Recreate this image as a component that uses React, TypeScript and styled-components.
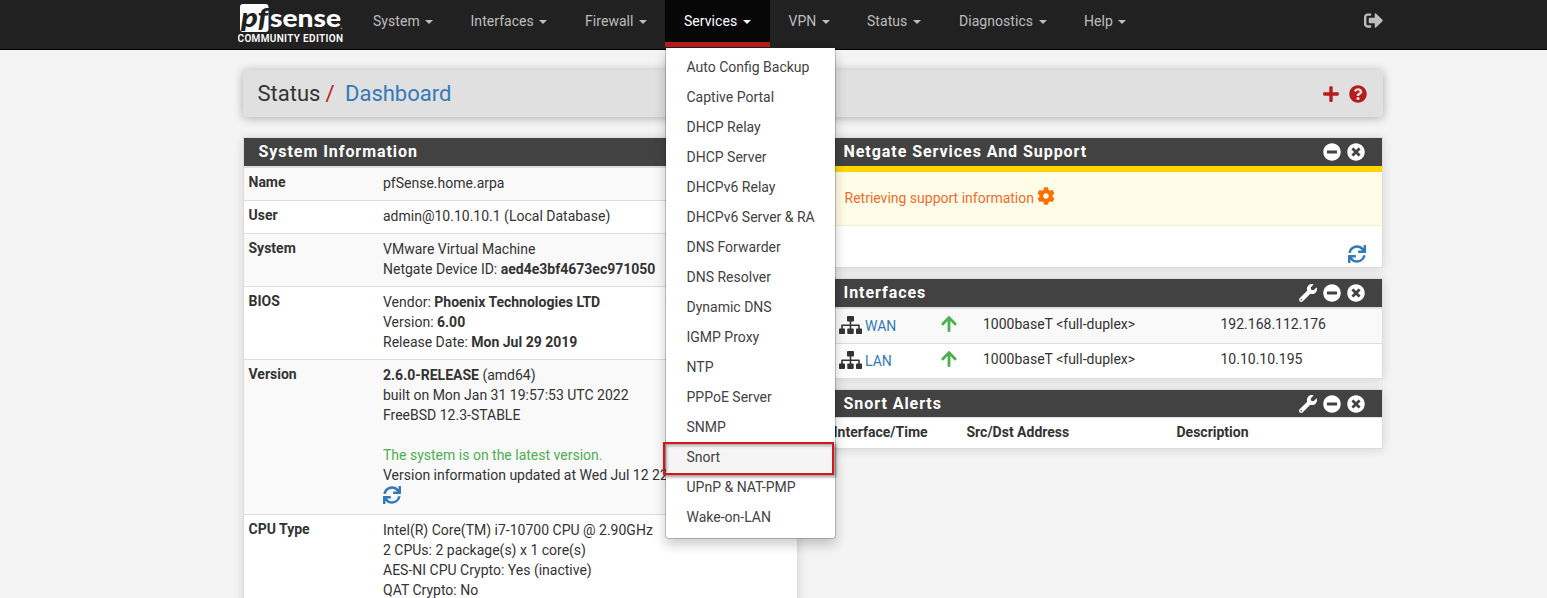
import React from "react";
import styled, { createGlobalStyle, css } from "styled-components";
import {
  FaCog, FaMinusCircle, FaPlus, FaQuestionCircle, FaSignOutAlt,
  FaSync, FaTimesCircle, FaWrench, FaArrowUp,
} from "react-icons/fa";

const GlobalStyle = createGlobalStyle`
  *, *::before, *::after { box-sizing: border-box; }
  html, body { margin: 0; padding: 0; }
  body {
    background: #f4f4f4;
    color: #333;
    font: 14px/20px Roboto, "Liberation Sans", sans-serif;
    overflow: hidden;
  }
`;

const Page = styled.div`
  height: 598px;
  overflow: hidden;
`;

const Navbar = styled.header`
  display: flex;
  height: 50px;
  padding-left: 238px;
  background: #212121;
  border-bottom: 1px solid #000;
`;

const Brand = styled.div`
  width: 116px;
  flex: none;
  svg { display: block; }
`;

const Menu = styled.nav`
  display: flex;
  flex: 1;
`;

const MenuItem = styled.div<{ $width: number; $active?: boolean }>`
  position: relative;
  width: ${(p) => p.$width}px;
  flex: none;
  height: 47px;
  padding: 11px 0 0 19px;
  color: #bdbdbd;
  white-space: nowrap;
  ${(p) => p.$active && css`
    background: #070707;
    color: #fff;
    border-bottom: 5px solid #b71c1c;
  `}
`;

const MenuLabel = styled.span`
  letter-spacing: 0.05px;
`;

const Caret = styled.span`
  display: inline-block;
  margin-left: 5.5px;
  vertical-align: middle;
  border-top: 4px solid;
  border-left: 4px solid transparent;
  border-right: 4px solid transparent;
`;

const Logout = styled.div`
  width: 20px;
  margin: 11px 163px 0 auto;
  color: #bdbdbd;
  font-size: 19px;
`;

const Dropdown = styled.div`
  position: absolute;
  z-index: 10;
  top: 48px;
  left: 0;
  width: 171px;
  height: 491px;
  padding: 4px 0;
  background: #fff;
  background-clip: padding-box;
  border: 1px solid rgba(0, 0, 0, 0.2);
  border-top: 0;
  border-radius: 0 0 4px 4px;
  box-shadow: 0 6px 12px rgba(0, 0, 0, 0.2);
  color: #424242;
`;

const DropdownItem = styled.div<{ $highlight?: boolean }>`
  height: 30px;
  padding: 5px 0 5px 20.5px;
  ${(p) => p.$highlight && css`
    position: relative;
    background: #f5f5f5;
    &::after {
      content: "";
      position: absolute;
      inset: 0 1px -3px -3px;
      border: 2px solid #d6141a;
      box-shadow: 2px 2px 3px rgba(0, 0, 0, 0.4), inset 2px 2px 3px rgba(0, 0, 0, 0.3);
    }
  `}
`;

const Container = styled.main`
  width: 1140px;
  margin: 20px 0 0 243px;
`;

const TitleBar = styled.div`
  display: flex;
  align-items: center;
  height: 47px;
  padding: 0 15px 0 14.5px;
  margin-bottom: 20px;
  background: #e0e0e0;
  border-radius: 4px;
  box-shadow: 0 1px 10px rgba(0, 0, 0, 0.3);
`;

const Crumbs = styled.div`
  flex: 1;
  font-size: 22px;
  white-space: pre;
`;

const Slash = styled.span`
  color: #b71c1c;
  margin: 0 10.5px 0 5px;
`;

const Link = styled.span`
  color: #337ab7;
`;

const TitleIcons = styled.div`
  display: flex;
  gap: 9px;
  color: #b71c1c;
  font-size: 18px;
  padding-top: 1px;
  margin-right: 1px;
`;

const Columns = styled.div`
  display: grid;
  grid-template-columns: 555px 555px;
  gap: 30px;
  align-items: start;
`;

const Stack = styled.div`
  display: grid;
  gap: 10px;
`;

const Panel = styled.section`
  background: #fff;
  border: 1px solid #ddd;
  box-shadow: 0 1px 10px rgba(0, 0, 0, 0.13);
`;

const PanelHeader = styled.div<{ $short?: boolean }>`
  display: flex;
  align-items: center;
  height: ${(p) => (p.$short ? 27 : 28)}px;
  padding: 0 17px 0 14.5px;
  background: #424242;
  color: #fff;
`;

const PanelTitle = styled.div`
  flex: 1;
  font-size: 16px;
  font-weight: 700;
  letter-spacing: 0.95px;
`;

const PanelIcons = styled.div`
  display: flex;
  gap: 6px;
  font-size: 18px;
`;

const InfoRow = styled.div<{ $height: number; $shaded?: boolean; $first?: boolean }>`
  display: grid;
  grid-template-columns: 134px 1fr;
  height: ${(p) => p.$height}px;
  padding: 5px;
  border-top: ${(p) => (p.$first ? 2 : 1)}px solid #ddd;
  background: ${(p) => (p.$shaded ? "#f9f9f9" : "#fff")};
`;

const InfoName = styled.div`
  font-weight: 700;
  margin: -1px 0 0 -0.5px;
`;

const InfoValue = styled.div`
  white-space: nowrap;
  b { font-weight: 700; }
`;

const Latest = styled.div`
  margin-top: 20px;
  color: #4caf50;
`;

const Refresh = styled.div`
  height: 20px;
  color: #337ab7;
  font-size: 18px;
  svg { display: block; margin-top: 1px; }
`;

const Notice = styled.div`
  display: flex;
  gap: 3px;
  height: 60px;
  padding: 16px 15.5px;
  border-top: 6px solid #ffd600;
  border-bottom: 1px solid #faebcc;
  background: #fffde7;
  color: #ed6c30;
  svg { color: #ff6f00; font-size: 18px; margin-top: -1px; }
`;

const SupportFooter = styled.div`
  display: flex;
  justify-content: flex-end;
  height: 41px;
  padding: 19px 16px 0;
  color: #337ab7;
  font-size: 18px;
`;

const InterfaceRow = styled.div<{ $shaded?: boolean }>`
  display: grid;
  grid-template-columns: 110.5px 43.5px 237.5px 1fr;
  height: ${(p) => (p.$shaded ? 36 : 35)}px;
  padding-top: 5px;
  border-top: ${(p) => (p.$shaded ? 2 : 1)}px solid #ddd;
  background: ${(p) => (p.$shaded ? "#f9f9f9" : "#fff")};
`;

const InterfaceName = styled.div`
  display: flex;
  gap: 3.5px;
  padding: 2px 0 0 9.500px;
`;

const UpIcon = styled.div`
  padding-top: 1px;
  color: #4caf50;
  font-size: 18px;
  line-height: 1;
`;

const AlertHeadings = styled.div`
  display: grid;
  grid-template-columns: 133px 210px 1fr;
  height: 31px;
  padding: 4px 0 0 4.5px;
  font-weight: 700;
  border-top: 1px solid #ddd;
`;

const services = [
  "Auto Config Backup", "Captive Portal", "DHCP Relay", "DHCP Server",
  "DHCPv6 Relay", "DHCPv6 Server & RA", "DNS Forwarder", "DNS Resolver",
  "Dynamic DNS", "IGMP Proxy", "NTP", "PPPoE Server", "SNMP", "Snort",
  "UPnP & NAT-PMP", "Wake-on-LAN",
];

const menu: [string, number][] = [
  ["System", 97.5], ["Interfaces", 114.5], ["Firewall", 99], ["Services", 104.5],
  ["VPN", 78.5], ["Status", 92], ["Diagnostics", 125], ["Help", 80],
];

function Logo() {
  return (
    <svg width="108" height="48" viewBox="0 0 108 48">
      <rect x="2" y="4" width="28.500" height="28" rx="3" fill="#fff" />
      <g fontFamily="Lato, sans-serif" fontWeight="900">
        <text x="3" y="27" fontSize="26" fontStyle="italic" fill="#212121" textLength="27" lengthAdjust="spacingAndGlyphs">pf</text>
        <text x="32" y="27" fontSize="25" fill="#fff" textLength="71" lengthAdjust="spacingAndGlyphs">sense</text>
      </g>
      <text x="-0.5" y="42" fontSize="10" fontFamily="Roboto, sans-serif" fontWeight="600" fill="#fff" textLength="105.500" lengthAdjust="spacing">COMMUNITY EDITION</text>
      <circle cx="103.500" cy="28.500" r="1" fill="#777" />
    </svg>
  );
}

function NetworkIcon() {
  return (
    <svg width="23" height="18" viewBox="0 0 23 18" fill="#333">
      <rect x="8" y="0" width="7" height="5.500" rx="0.800" />
      <rect x="0" y="12.500" width="6" height="5.500" rx="0.800" />
      <rect x="8.300" y="12.500" width="6.400" height="5.500" rx="0.800" />
      <rect x="17" y="12.500" width="6" height="5.500" rx="0.800" />
      <path d="M11.500 5v8M3 13V9.200h17V13" fill="none" stroke="#333" strokeWidth="1.600" strokeLinejoin="round" />
    </svg>
  );
}

function Header({ title, wrench, short }: { title: string; wrench?: boolean; short?: boolean }) {
  return (
    <PanelHeader $short={short}>
      <PanelTitle>{title}</PanelTitle>
      <PanelIcons>
        {wrench && <FaWrench />}
        <FaMinusCircle />
        <FaTimesCircle />
      </PanelIcons>
    </PanelHeader>
  );
}

function Interface({ name, address, shaded }: { name: string; address: string; shaded?: boolean }) {
  return (
    <InterfaceRow $shaded={shaded}>
      <InterfaceName><NetworkIcon /><Link>{name}</Link></InterfaceName>
      <UpIcon><FaArrowUp /></UpIcon>
      <div>1000baseT &lt;full-duplex&gt;</div>
      <div>{address}</div>
    </InterfaceRow>
  );
}

export default function App() {
  return (
    <Page>
      <GlobalStyle />
      <Navbar>
        <Brand><Logo /></Brand>
        <Menu>
          {menu.map(([label, width]) => (
            <MenuItem key={label} $width={width} $active={label === "Services"}>
              <MenuLabel>{label}</MenuLabel><Caret />
              {label === "Services" && (
                <Dropdown>
                  {services.map((s) => (
                    <DropdownItem key={s} $highlight={s === "Snort"}>{s}</DropdownItem>
                  ))}
                </Dropdown>
              )}
            </MenuItem>
          ))}
        </Menu>
        <Logout><FaSignOutAlt /></Logout>
      </Navbar>
      <Container>
        <TitleBar>
          <Crumbs>Status<Slash>/</Slash><Link>Dashboard</Link></Crumbs>
          <TitleIcons><FaPlus /><FaQuestionCircle /></TitleIcons>
        </TitleBar>
        <Columns>
          <Panel>
            <Header title="System Information" />
            <InfoRow $height={34} $shaded $first>
              <InfoName>Name</InfoName><InfoValue>pfSense.home.arpa</InfoValue>
            </InfoRow>
            <InfoRow $height={33}>
              <InfoName>User</InfoName><InfoValue>admin@10.10.10.1 (Local Database)</InfoValue>
            </InfoRow>
            <InfoRow $height={53} $shaded>
              <InfoName>System</InfoName>
              <InfoValue>VMware Virtual Machine<br />Netgate Device ID: <b>aed4e3bf4673ec971050</b></InfoValue>
            </InfoRow>
            <InfoRow $height={73}>
              <InfoName>BIOS</InfoName>
              <InfoValue>
                Vendor: <b>Phoenix Technologies LTD</b><br />
                Version: <b>6.00</b><br />
                Release Date: <b>Mon Jul 29 2019</b>
              </InfoValue>
            </InfoRow>
            <InfoRow $height={155} $shaded>
              <InfoName>Version</InfoName>
              <InfoValue>
                <b>2.6.0-RELEASE</b> (amd64)<br />
                built on Mon Jan 31 19:57:53 UTC 2022<br />
                FreeBSD 12.3-STABLE
                <Latest>The system is on the latest version.</Latest>
                Version information updated at Wed Jul 12 22
                <Refresh><FaSync /></Refresh>
              </InfoValue>
            </InfoRow>
            <InfoRow $height={113}>
              <InfoName>CPU Type</InfoName>
              <InfoValue>
                Intel(R) Core(TM) i7-10700 CPU @ 2.90GHz<br />
                2 CPUs: 2 package(s) x 1 core(s)<br />
                AES-NI CPU Crypto: Yes (inactive)<br />
                QAT Crypto: No
              </InfoValue>
            </InfoRow>
          </Panel>
          <Stack>
            <Panel>
              <Header title="Netgate Services And Support" />
              <Notice>Retrieving support information<FaCog /></Notice>
              <SupportFooter><FaSync /></SupportFooter>
            </Panel>
            <Panel>
              <Header title="Interfaces" wrench />
              <Interface name="WAN" address="192.168.112.176" shaded />
              <Interface name="LAN" address="10.10.10.195" />
            </Panel>
            <Panel>
              <Header title="Snort Alerts" wrench short />
              <AlertHeadings>
                <div>Interface/Time</div><div>Src/Dst Address</div><div>Description</div>
              </AlertHeadings>
            </Panel>
          </Stack>
        </Columns>
      </Container>
    </Page>
  );
}
